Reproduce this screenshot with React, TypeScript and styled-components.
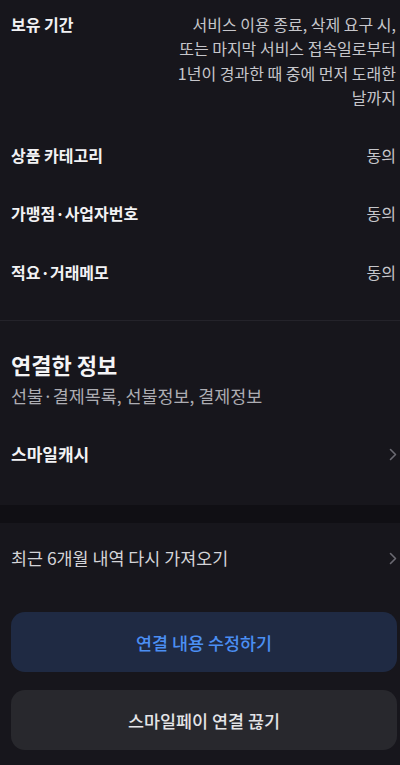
import { FC } from 'react';
import styled, { createGlobalStyle } from 'styled-components';

const GlobalStyle = createGlobalStyle`
  html, body {
    margin: 0;
    padding: 0;
    background: #17161c;
  }
  body {
    font-family: 'Noto Sans CJK KR', 'Noto Sans', sans-serif;
    -webkit-font-smoothing: antialiased;
  }
`;

const TERMS = [
  {
    label: '보유 기간',
    value: ['서비스 이용 종료, 삭제 요구 시,', '또는 마지막 서비스 접속일로부터', '1년이 경과한 때 중에 먼저 도래한', '날까지'],
  },
  { label: '상품 카테고리', value: ['동의'] },
  { label: '가맹점·사업자번호', value: ['동의'] },
  { label: '적요·거래메모', value: ['동의'] },
];

const Chevron: FC = () => (
  <svg width="8" height="13" viewBox="0 0 8 13" fill="none">
    <path d="M1.5 1.5L6.5 6.5L1.5 11.5" stroke="#6b6a72" strokeWidth="1.6" strokeLinecap="round" strokeLinejoin="round" />
  </svg>
);

export default function App() {
  return (
    <Page>
      <GlobalStyle />
      <TermList>
        {TERMS.map((item) => (
          <TermRow key={item.label}>
            <Label>{item.label}</Label>
            <Value>
              {item.value.map((line) => (
                <span key={line}>{line}</span>
              ))}
            </Value>
          </TermRow>
        ))}
      </TermList>

      <Section>
        <Title>연결한 정보</Title>
        <Subtitle>선불·결제목록, 선불정보, 결제정보</Subtitle>
        <LinkRow className="cash">
          <Label className="large">스마일캐시</Label>
          <Chevron />
        </LinkRow>
      </Section>

      <Band />

      <Bottom>
        <LinkRow>
          <LinkText>최근 6개월 내역 다시 가져오기</LinkText>
          <Chevron />
        </LinkRow>
        <Buttons>
          <Button className="primary">연결 내용 수정하기</Button>
          <Button>스마일페이 연결 끊기</Button>
        </Buttons>
      </Bottom>
    </Page>
  );
}

const Page = styled.div`
  width: 400px;
  height: 765px;
  overflow: hidden;
  background: #17161c;
  color: #f2f2f4;
`;

const TermList = styled.div`
  display: flex;
  flex-direction: column;
  gap: 34px;
  padding: 12px 3px 36px 11px;
  border-bottom: 1px solid #24232a;
`;

const TermRow = styled.div`
  display: flex;
  justify-content: space-between;
  align-items: flex-start;
  gap: 16px;
`;

const Label = styled.div`
  flex-shrink: 0;
  font-size: 16px;
  line-height: 24px;
  font-weight: 700;
  color: #f2f2f4;

  &.large {
    font-size: 17px;
  }
`;

const Value = styled.div`
  display: flex;
  flex-direction: column;
  align-items: flex-end;
  font-size: 16px;
  line-height: 24.3px;
  color: #c6c6cb;
  white-space: nowrap;
  padding-right: 1px;
`;

const Section = styled.div`
  padding: 29px 3px 39px 11px;
  display: flex;
  flex-direction: column;
`;

const Title = styled.div`
  font-size: 22px;
  line-height: 28px;
  font-weight: 700;
  color: #f4f4f6;
`;

const Subtitle = styled.div`
  margin-top: 6px;
  font-size: 17.4px;
  line-height: 24px;
  color: #adadb3;
`;

const LinkRow = styled.div`
  display: flex;
  justify-content: space-between;
  align-items: center;

  &.cash {
    margin-top: 34px;
  }
`;

const Band = styled.div`
  height: 18px;
  background: #100f14;
`;

const Bottom = styled.div`
  padding: 23px 3px 0 11px;
`;

const LinkText = styled.div`
  font-size: 17.4px;
  line-height: 24px;
  color: #d4d4d8;
`;

const Buttons = styled.div`
  margin-top: 42px;
  display: flex;
  flex-direction: column;
  gap: 18px;
`;

const Button = styled.div`
  height: 60px;
  border-radius: 14px;
  background: #28282d;
  color: #e4e4e7;
  font-size: 17.4px;
  font-weight: 500;
  display: flex;
  align-items: center;
  justify-content: center;

  &.primary {
    background: #1f2a43;
    color: #4b8ff3;
  }
`;
